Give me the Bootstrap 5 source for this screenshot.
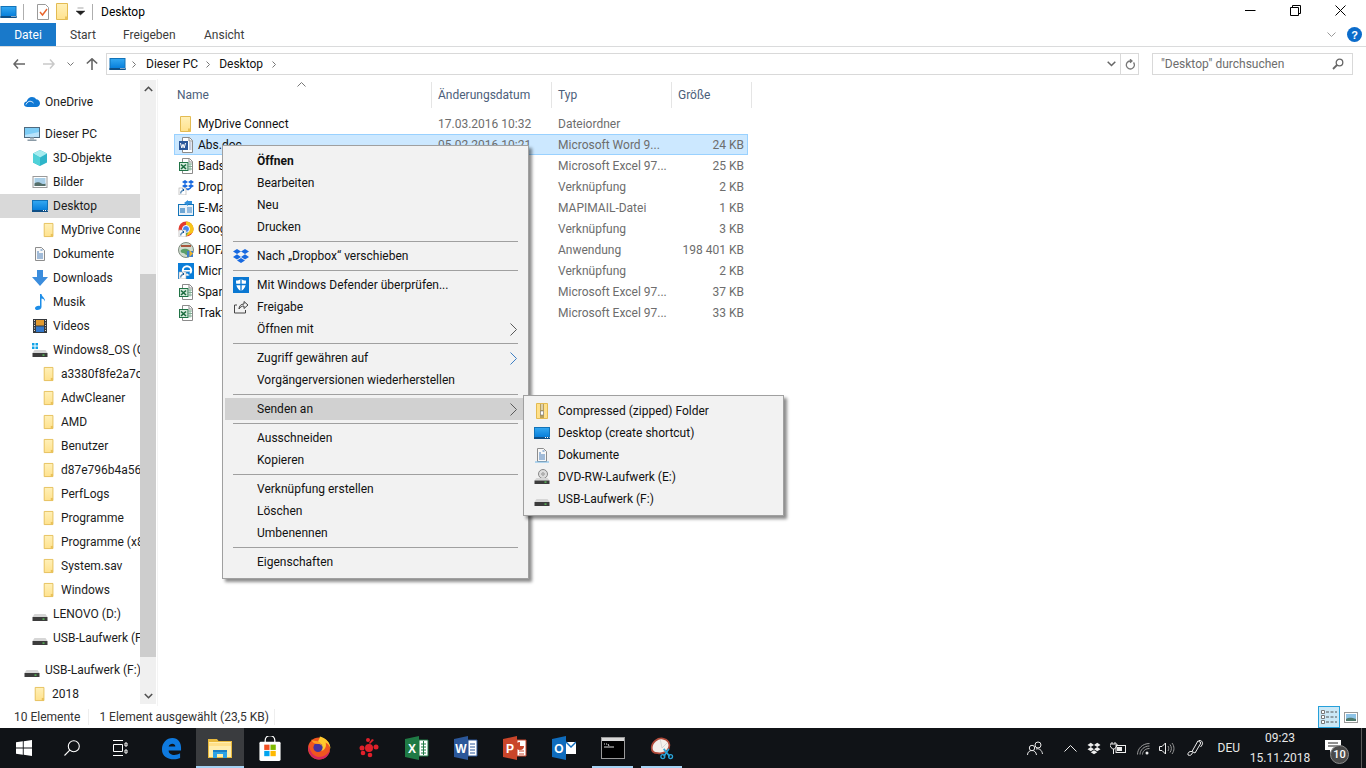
<!DOCTYPE html>
<html lang="de"><head><meta charset="utf-8"><title>Desktop</title>
<link href="https://cdn.jsdelivr.net/npm/bootstrap@5.3.0/dist/css/bootstrap.min.css" rel="stylesheet">
<style>
html,body{height:100%;overflow:hidden}
body{width:1366px;height:768px;background:#fff;font:12px/16px Roboto,"Noto Sans",sans-serif;color:#000}
svg{display:block;flex:none}
.ttl{height:23px}
.ttl-name{padding-top:1px}
.vsep{width:1px;height:16px;background:#aeaeae}
.wbtns{margin-left:auto;width:121px;padding-right:20px;justify-content:space-between;margin-top:-2px}
.rib{height:24px;border-bottom:1px solid #dadbdc}
.rtab{height:23px;display:flex;align-items:center;color:#3c3c3c}
.rtab.cur{background:#1979ca;color:#fff;width:56px;justify-content:center;margin-right:14px}
.t-start{width:53px}.t-frei{width:81px}
.addr{height:32px;padding-top:6px}
.ab{margin-left:13px;width:93px;height:22px}
.apath{margin:0;width:1033px;height:22px;border:1px solid #d9d9d9;padding-left:2px;color:#111}
.srch{margin-left:13px;width:201px;height:22px;border:1px solid #d9d9d9;padding:0 8px;color:#6d6d6d;justify-content:space-between}
.main{height:627px}
.nav-pane{width:158px;border-right:1px solid #f4f4f4;padding-top:1px}
.nav-list{width:140px;overflow:hidden;padding-top:10px}
.nrow{height:24px;display:flex;align-items:center;white-space:nowrap;overflow:hidden;color:#1c1c1c}
.nrow.sel{background:#d9d9d9}
.nrow.gap{margin-top:8px}
.l1{padding-left:24px}.l2{padding-left:32px}.l3{padding-left:42px}.l2b{padding-left:33px}
.nrow svg{margin-right:5px}
.sbar{width:16px;height:624px;background:#f0f0f0;flex:none}
.sarrow{height:17px}
.strack{height:590px;padding-top:177px}
.sthumb{height:383px;background:#cdcdcd}
.fl{padding:0 0 0 16px;flex:1;min-width:0}
.hdr{height:26px;margin:3px 0 0 3px;color:#4c607a;position:relative}
.hc{height:26px;padding-left:6px;border-right:1px solid #e5e5e5;display:flex;align-items:center}
.w1{width:255px;padding-left:0}.w2{width:120px}.w3{width:120px}.w4{width:80px}
.caret{position:absolute;left:120px;top:0}
.frows{padding-top:5px}
.fr{height:21px;width:574px;display:flex;align-items:center;border:1px solid transparent;color:#6d6d6d;white-space:nowrap}
.fr.sel{background:#cce8ff;border-color:#99d1ff}
.cn{width:258px;display:flex;align-items:center;color:#111;padding-left:3px;overflow:hidden}
.cn svg{margin-right:4px}
.cd{width:125px;padding-left:5px}
.ct{width:120px}
.cs{width:66px;text-align:right}
.stat{height:22px;color:#333;padding-left:14px}
.stat .vsep{height:16px;background:#eee}
.sp1{margin:0 10px 0 8px}.sp2{margin-left:5px}
.vbtns{margin-left:auto;margin-right:8px;gap:4px}
.vb{width:22px;height:22px;border:1px solid #26a0da;background:#cbe8f6;display:flex;align-items:center;justify-content:center}
.tbar{height:40px;background:#101317;color:#e8e8e8}
.tb{height:40px;width:48px;display:flex;align-items:center;justify-content:center;position:relative;flex:none}
.tb.app{width:49px}
.tb.first{margin-left:3px}
.tb.on{background:#3a3c3f;width:48px;margin-right:1px}
.tb.open:after,.tb.on:after{content:"";position:absolute;left:0;right:0;bottom:0;height:2px;background:#a5d2f3}
.tb.open:after{left:4px;right:4px}
.tray{margin-left:auto;font-size:12px;height:40px}
.clock{text-align:center;width:66px;line-height:20px;margin-left:7px}
.note{position:relative;width:16px;height:40px;margin:0 20px 0 12px;padding-top:12px}
.tbadge{position:absolute;left:5px;top:17px;width:19px;height:19px;border-radius:50%;background:#4b4b4b;border:1px solid #8c8c8c;color:#fff;font-size:11px;font-weight:500;line-height:17px;text-align:center}
.tend{width:1px;height:40px;background:#5a5a5a;margin-right:4px}
.cm{--bs-dropdown-padding-y:0;display:block;border-radius:0;border:1px solid #a0a0a0;background:#f2f2f2;box-shadow:3px 3px 3px rgba(0,0,0,.45);font-size:12px;color:#111;min-width:0;margin:0;padding:4px 2px 5px}
.cm1{position:absolute;left:222px;top:145px;width:307px}
.cm2{position:absolute;left:523px;top:395px;width:261px;z-index:1001}
.cmi{height:22px;padding:0 10px 0 32px;display:flex;align-items:center;position:relative;color:#111;white-space:nowrap}
.cmi.act{background:#d1d1d1}
.cmi.b{font-weight:700}
.cmi>svg:not(.arw){position:absolute;left:8px;top:3px}
.cmi>svg.arw{position:absolute;right:9px;top:5px}
.cm hr{margin:3px 8px;height:1px;border:0;background:#a0a0a0;opacity:1}
.cm2 .cmi{padding-left:32px}
</style></head><body class="d-flex flex-column">
<svg width="0" height="0" style="position:absolute"><defs>
<linearGradient id="gm" x1="0" y1="0" x2="0" y2="1"><stop offset="0" stop-color="#35a9f2"/><stop offset="1" stop-color="#0078d7"/></linearGradient>
<linearGradient id="gf" x1="0" y1="0" x2="0" y2="1"><stop offset="0" stop-color="#fff0b8"/><stop offset="1" stop-color="#ffe28e"/></linearGradient>
<symbol id="mon" viewBox="0 0 16 16"><rect x=".5" y="2.500" width="15" height="11" fill="url(#gm)" stroke="#1273b8"/><rect x="0" y="12" width="16" height="2" fill="#0f4f86"/><path d="M11 12.500h1M13 12.500h1M15 12.500h.5" stroke="#fff"/></symbol>
<symbol id="fold" viewBox="0 0 16 16"><path d="M2.500 .5h10v15h-10z" fill="url(#gf)" stroke="#e3bb52"/><path d="M10 15.500v-3h2.500v3z" fill="#e9c25a"/></symbol>
<symbol id="word" viewBox="0 0 16 16"><path d="M4.500 .5h7l3 3v12h-10z" fill="#fff" stroke="#8b8b8b"/><path d="M11 .5v3.500h3.500" fill="none" stroke="#8b8b8b"/><path d="M11 6h2.500M11 8h2.500M11 10h2.500M11 12h2.500" stroke="#8a9cc0"/><rect x="1" y="4" width="9" height="9" fill="#2b579a"/><path d="M2.500 6l1.300 5 1.200-3.800 1.200 3.800 1.300-5" fill="none" stroke="#fff"/></symbol>
<symbol id="xls" viewBox="0 0 16 16"><path d="M4.500 .5h7l3 3v12h-10z" fill="#fff" stroke="#8b8b8b"/><path d="M11 .5v3.500h3.500" fill="none" stroke="#8b8b8b"/><path d="M10.500 6h3.500M10.500 8.500h3.500M10.500 11h3.500M12 5.500v7" stroke="#7fae93"/><rect x="1.500" y="4.500" width="8.500" height="8" fill="#d5eadc" stroke="#217346"/><path d="M3 6.500l5 4.500M8 6.500l-5 4.500" stroke="#1a6b3e" stroke-width="1.600"/></symbol>
<symbol id="drop" viewBox="0 0 16 16"><g fill="#1769e0"><path d="M7 1l3 2-3 2-3-2zM13 1l3 2-3 2-3-2zM7 5l3 2-3 2-3-2zM13 5l3 2-3 2-3-2zM10 9.500l3-1.500v1.500l-3 2-2-1.300V9z"/></g></symbol>
<symbol id="dropf" viewBox="0 0 16 16"><g fill="#1769e0"><path d="M4 1l4 2.600-4 2.500L0 3.600zM12 1l4 2.600-4 2.500-4-2.500zM4 6.300L8 9l-4 2.500L0 9zM12 6.300L16 9l-4 2.500L8 9zM8 10l4 2.500-4 2.500-4-2.500z"/></g></symbol>
<symbol id="lnk" viewBox="0 0 16 16"><rect x="1" y="9" width="7" height="7" fill="#fff" stroke="#a8a8a8" stroke-width=".6"/><path d="M2.800 14.500c0-2.500 1-3.500 3-3.500M4.500 9.800l1.600 1.200-1.600 1.200" stroke="#0b5394" stroke-width="1" fill="none"/></symbol>
<symbol id="doc" viewBox="0 0 16 16"><path d="M3.500 1.500h6l3 3v10h-9z" fill="#f8f8f8" stroke="#8d8d8d"/><path d="M5 6h2M5 8h6M5 10h6M5 12h6M8.500 4h2" stroke="#4a7fb8"/></symbol>
<symbol id="dl" viewBox="0 0 16 16"><path d="M5 0h6v7h5l-8 9-8-9h5z" fill="#3b8ddd"/></symbol>
<symbol id="mus" viewBox="0 0 16 16"><path d="M8 0h1.500c.4 3 4 4 3.500 7.500-.6-2-2-2.800-3.500-3V13c0 2-2 3-4 3-1.700 0-2.500-.8-2.500-1.800C3 12.500 5.500 11.500 8 12z" fill="#1c8de8"/></symbol>
<symbol id="vid" viewBox="0 0 16 16"><rect x="1" y="1" width="14" height="14" fill="#35393d"/><path d="M2 2.500h1M2 5h1M2 7.500h1M2 10h1M2 12.500h1M13 2.500h1M13 5h1M13 7.500h1M13 10h1M13 12.500h1" stroke="#ddd"/><rect x="4" y="2" width="8" height="5.500" fill="#e29a2e"/><rect x="4" y="8.500" width="8" height="5.500" fill="#3377c9"/></symbol>
<symbol id="pic" viewBox="0 0 16 16"><rect x="1" y="2.500" width="14" height="11" fill="#fff" stroke="#9a9a9a"/><rect x="2.500" y="4" width="11" height="8" fill="#a9cfe8"/><path d="M2.500 9.500c3-2 5-1 7 0s3 .5 4 0V12h-11z" fill="#566f6a"/></symbol>
<symbol id="cube" viewBox="0 0 16 16"><path d="M8 0l7 3.500v9L8 16l-7-3.500v-9z" fill="#2eb5c9"/><path d="M8 7.500L15 3.500 8 0 1 3.500z" fill="#a6ecef"/><path d="M8 7.500V16L1 12.500v-9z" fill="#4fd1d8"/></symbol>
<symbol id="pc" viewBox="0 0 16 16"><rect x=".5" y="1.500" width="15" height="10" fill="#b9e3fb" stroke="#4f6a7f"/><path d="M1 2h14v4L1 9z" fill="#7ecdf6"/><rect x="6" y="11.500" width="4" height="2" fill="#a9b6bf"/><rect x="3.500" y="13.500" width="9" height="1.500" fill="#8a9aa6"/></symbol>
<symbol id="cld" viewBox="0 0 16 16"><path d="M3.500 13C1.500 13 0 12 0 10.200 0 8.700 1.200 7.600 2.600 7.500 3.300 4.800 5.500 3 8 3c1.700 0 3.300.9 4.100 2.300 2.200.1 3.900 1.900 3.900 4 0 2.200-1.700 3.700-3.800 3.700z" fill="#0f78d4"/><path d="M2 10.500c2-4 5-4 7.500-1.500" stroke="#fff" fill="none"/></symbol>
<symbol id="hdd" viewBox="0 0 16 16"><path d="M2.500 8h11l2 3H.5z" fill="#d6d6d6"/><rect x=".5" y="11" width="15" height="4" fill="#3c3c3c"/><rect x="10.500" y="12.500" width="2" height="1.200" fill="#5cd65c"/></symbol>
<symbol id="win8" viewBox="0 0 16 16"><path d="M0 1h2.500v2.500H0zM3.500 1H6v2.500H3.500zM0 4.500h2.500V7H0zM3.500 4.500H6V7H3.500z" fill="#11a3e8"/><path d="M2.500 8h11l2 3H.5z" fill="#d6d6d6"/><rect x=".5" y="11" width="15" height="4" fill="#3c3c3c"/><rect x="10.500" y="12.500" width="2" height="1.200" fill="#5cd65c"/></symbol>
<symbol id="mail" viewBox="0 0 16 16"><rect x=".5" y="4.500" width="15" height="11" fill="#e9f1f8" stroke="#1273b8"/><path d="M2 8h5v5H2z" fill="#6ea6d4"/><path d="M9 8h5M9 10h5M9 12h5" stroke="#3d85c6"/><path d="M14 1v3h-4v2L6 3l4-3v1z" fill="#2f90dc"/></symbol>
<symbol id="chr" viewBox="0 0 16 16"><circle cx="8" cy="8" r="7.500" fill="#e33b2e"/><path d="M8 8L1.500 11.800A7.500 7.500 0 0 0 8 15.500l4-7z" fill="#2fa84f"/><path d="M8 .5A7.500 7.500 0 0 1 14.500 11.800L8 15.500l3.500-7H8z" fill="#f7c519"/><circle cx="8" cy="8" r="3.500" fill="#4285f4" stroke="#fff"/></symbol>
<symbol id="glb" viewBox="0 0 16 16"><circle cx="8" cy="8" r="7.500" fill="#cfdccf" stroke="#7d8a7d"/><rect x="3" y="3" width="10" height="2" fill="#a8563c"/><path d="M3 8c3-2 6-1 8 0s0 5-2 5-2-2-4-2-3-2-2-3z" fill="#5b9e6a"/><path d="M9 9h6v6H9z" fill="#3d7fd0"/><path d="M11.500 8l3.500 3.500-3.500 3.500" fill="#f0b429"/></symbol>
<symbol id="ie" viewBox="0 0 16 16"><rect width="16" height="16" fill="#0a7dd8"/><circle cx="9" cy="7.500" r="4.200" fill="none" stroke="#fff" stroke-width="2"/><path d="M4.500 7.800h9" stroke="#fff" stroke-width="1.600"/><path d="M10 10.500l3 1" stroke="#0a7dd8" stroke-width="1.500"/></symbol>
<symbol id="arrow" viewBox="0 0 7 14"><path d="M.5 .5l6 6-6 6" fill="none" stroke="#5a5a5a"/></symbol>
<symbol id="arrowb" viewBox="0 0 7 14"><path d="M.5 .5l6 6-6 6" fill="none" stroke="#3d7fc4"/></symbol>
</defs></svg>

<!-- Title bar -->
<div class="ttl d-flex align-items-center">
<svg width="17" height="16"><use href="#mon"/></svg>
<div class="vsep" style="margin:0 11px 0 6px"></div>
<svg width="16" height="18" viewBox="0 0 16 18"><path d="M2.500 1.500h8l3 3v12h-11z" fill="#fff" stroke="#9a9a9a"/><path d="M5 9l2.500 3L12 6" fill="none" stroke="#e8632a" stroke-width="1.400"/></svg>
<svg style="margin-left:5px" width="14" height="17" viewBox="0 0 14 17"><path d="M.5 .5h11v16H.500z" fill="url(#gf)" stroke="#e3bb52"/><path d="M9 16.500v-3h2.500v3z" fill="#e9c25a"/></svg>
<svg style="margin-left:6px" width="9" height="9" viewBox="0 0 9 9"><path d="M1.500 1h6M0 4h9L4.500 8z" fill="#222" stroke="#222" stroke-width=".4"/></svg>
<div class="vsep" style="margin:0 8px 0 7px"></div>
<span class="ttl-name">Desktop</span>
<div class="wbtns d-flex align-items-center">
<svg width="11" height="11" viewBox="0 0 11 11"><path d="M0 5.500h10.500" stroke="#000"/></svg>
<svg width="11" height="11" viewBox="0 0 11 11"><path d="M.5 2.500h8v8h-8zM2.500 2.500v-2h8v8h-2" fill="none" stroke="#000"/></svg>
<svg width="11" height="11" viewBox="0 0 11 11"><path d="M.5 .5l10 10M10.500 .5l-10 10" stroke="#000"/></svg>
</div></div>

<!-- Ribbon tabs -->
<div class="rib d-flex align-items-start">
<div class="rtab cur">Datei</div><div class="rtab t-start">Start</div><div class="rtab t-frei">Freigeben</div><div class="rtab">Ansicht</div>
<div class="ms-auto d-flex align-items-center" style="height:23px;padding-right:4px;gap:11px">
<svg width="9" height="5" viewBox="0 0 9 5"><path d="M.5 .5l4 4 4-4" fill="none" stroke="#9a9a9a"/></svg>
<svg width="15" height="15" viewBox="0 0 15 15"><circle cx="7.500" cy="7.500" r="7.500" fill="#0b6ccb"/><text x="7.500" y="11.500" text-anchor="middle" font-family="Liberation Sans" font-weight="700" font-size="11" fill="#fff">?</text></svg>
</div></div>

<!-- Address row -->
<div class="addr d-flex">
<div class="ab d-flex align-items-center">
<svg width="12" height="10" viewBox="0 0 12 10"><path d="M5 .5L1 5l4 4.500M1 5h11" fill="none" stroke="#666" stroke-width="1.500"/></svg>
<svg style="margin-left:18px" width="12" height="10" viewBox="0 0 12 10"><path d="M7 .5L11 5l-4 4.500M11 5H0" fill="none" stroke="#c9c9c9" stroke-width="1.500"/></svg>
<svg style="margin-left:12px" width="7" height="4" viewBox="0 0 7 4"><path d="M.5 .5l3 3 3-3" fill="none" stroke="#777"/></svg>
<svg style="margin-left:12px" width="12" height="12" viewBox="0 0 12 12"><path d="M.8 5.500L6 .8l5.200 4.700M6 1v11" fill="none" stroke="#666" stroke-width="1.600"/></svg>
</div>
<div class="apath d-flex align-items-center">
<svg width="17" height="16"><use href="#mon"/></svg>
<svg style="margin:0 10px 0 6px" width="4" height="7" viewBox="0 0 4 7"><path d="M.5 .5l3 3-3 3" fill="none" stroke="#777"/></svg>
<span>Dieser PC</span>
<svg style="margin:0 9px 0 8px" width="4" height="7" viewBox="0 0 4 7"><path d="M.5 .5l3 3-3 3" fill="none" stroke="#777"/></svg>
<span>Desktop</span>
<svg style="margin-left:9px" width="4" height="7" viewBox="0 0 4 7"><path d="M.5 .5l3 3-3 3" fill="none" stroke="#777"/></svg>
<svg class="ms-auto" width="9" height="6" viewBox="0 0 9 6"><path d="M.7 .7l3.800 3.800L8.300 .7" fill="none" stroke="#666" stroke-width="1.500"/></svg>
<div class="vsep" style="height:20px;background:#d9d9d9;margin:0 4px"></div>
<svg style="margin-right:3px" width="10" height="11" viewBox="0 0 10 11"><path d="M8.500 3.500A4 4 0 1 1 5 2H7M5 .2L7 2 5 3.800" fill="none" stroke="#777" stroke-width="1.300"/></svg>
</div>
<div class="srch d-flex align-items-center"><span>"Desktop" durchsuchen</span>
<svg width="12" height="12" viewBox="0 0 12 12"><circle cx="7.500" cy="4.500" r="3.300" fill="none" stroke="#666" stroke-width="1.300"/><path d="M5 7l-4 4" stroke="#666" stroke-width="1.800"/></svg></div>
</div>

<!-- Main -->
<div class="main d-flex">
<div class="nav-pane d-flex">
<div class="nav-list">
<div class="nrow l1"><svg width="16" height="16"><use href="#cld"/></svg>OneDrive</div>
<div class="nrow l1 gap"><svg width="16" height="16"><use href="#pc"/></svg>Dieser PC</div>
<div class="nrow l2"><svg width="16" height="16"><use href="#cube"/></svg>3D-Objekte</div>
<div class="nrow l2"><svg width="16" height="16"><use href="#pic"/></svg>Bilder</div>
<div class="nrow l2 sel"><svg width="16" height="16"><use href="#mon"/></svg>Desktop</div>
<div class="nrow l3"><svg width="14" height="16"><use href="#fold"/></svg>MyDrive Connect</div>
<div class="nrow l2"><svg width="16" height="16"><use href="#doc"/></svg>Dokumente</div>
<div class="nrow l2"><svg width="16" height="16"><use href="#dl"/></svg>Downloads</div>
<div class="nrow l2"><svg width="16" height="16"><use href="#mus"/></svg>Musik</div>
<div class="nrow l2"><svg width="16" height="16"><use href="#vid"/></svg>Videos</div>
<div class="nrow l2"><svg width="16" height="16"><use href="#win8"/></svg>Windows8_OS (C:)</div>
<div class="nrow l3"><svg width="14" height="16"><use href="#fold"/></svg>a3380f8fe2a7cc</div>
<div class="nrow l3"><svg width="14" height="16"><use href="#fold"/></svg>AdwCleaner</div>
<div class="nrow l3"><svg width="14" height="16"><use href="#fold"/></svg>AMD</div>
<div class="nrow l3"><svg width="14" height="16"><use href="#fold"/></svg>Benutzer</div>
<div class="nrow l3"><svg width="14" height="16"><use href="#fold"/></svg>d87e796b4a569</div>
<div class="nrow l3"><svg width="14" height="16"><use href="#fold"/></svg>PerfLogs</div>
<div class="nrow l3"><svg width="14" height="16"><use href="#fold"/></svg>Programme</div>
<div class="nrow l3"><svg width="14" height="16"><use href="#fold"/></svg>Programme (x86)</div>
<div class="nrow l3"><svg width="14" height="16"><use href="#fold"/></svg>System.sav</div>
<div class="nrow l3"><svg width="14" height="16"><use href="#fold"/></svg>Windows</div>
<div class="nrow l2"><svg width="16" height="16"><use href="#hdd"/></svg>LENOVO (D:)</div>
<div class="nrow l2"><svg width="16" height="16"><use href="#hdd"/></svg>USB-Laufwerk (F:)</div>
<div class="nrow l1 gap"><svg width="16" height="16"><use href="#hdd"/></svg>USB-Laufwerk (F:)</div>
<div class="nrow l2b"><svg width="14" height="16"><use href="#fold"/></svg>2018</div>
</div>
<div class="sbar">
<div class="sarrow d-flex align-items-center justify-content-center"><svg width="9" height="6" viewBox="0 0 9 6"><path d="M.8 5L4.500 1.300 8.200 5" fill="none" stroke="#505050" stroke-width="1.600"/></svg></div>
<div class="strack"><div class="sthumb"></div></div>
<div class="sarrow d-flex align-items-center justify-content-center"><svg width="9" height="6" viewBox="0 0 9 6"><path d="M.8 1L4.500 4.700 8.200 1" fill="none" stroke="#505050" stroke-width="1.600"/></svg></div>
</div>
</div>
<div class="fl">
<div class="hdr d-flex"><svg class="caret" width="9" height="5" viewBox="0 0 9 5"><path d="M.5 4.500l4-4 4 4" fill="none" stroke="#777"/></svg>
<div class="hc w1">Name</div><div class="hc w2">Änderungsdatum</div><div class="hc w3">Typ</div><div class="hc w4">Größe</div></div>
<div class="frows">
<div class="fr"><div class="cn"><svg width="16" height="16"><use href="#fold"/></svg>MyDrive Connect</div><div class="cd">17.03.2016 10:32</div><div class="ct">Dateiordner</div><div class="cs"></div></div>
<div class="fr sel"><div class="cn"><svg width="16" height="16"><use href="#word"/></svg>Abs.doc</div><div class="cd">05.02.2016 10:21</div><div class="ct">Microsoft Word 9...</div><div class="cs">24 KB</div></div>
<div class="fr"><div class="cn"><svg width="16" height="16"><use href="#xls"/></svg>Badsanierung.xls</div><div class="cd"></div><div class="ct">Microsoft Excel 97...</div><div class="cs">25 KB</div></div>
<div class="fr"><div class="cn"><svg width="16" height="16"><use href="#drop"/><use href="#lnk"/></svg>Dropbox</div><div class="cd"></div><div class="ct">Verknüpfung</div><div class="cs">2 KB</div></div>
<div class="fr"><div class="cn"><svg width="16" height="16"><use href="#mail"/></svg>E-Mail-Empfänger</div><div class="cd"></div><div class="ct">MAPIMAIL-Datei</div><div class="cs">1 KB</div></div>
<div class="fr"><div class="cn"><svg width="16" height="16"><use href="#chr"/><use href="#lnk"/></svg>Google Chrome</div><div class="cd"></div><div class="ct">Verknüpfung</div><div class="cs">3 KB</div></div>
<div class="fr"><div class="cn"><svg width="16" height="16"><use href="#glb"/></svg>HOFA</div><div class="cd"></div><div class="ct">Anwendung</div><div class="cs">198 401 KB</div></div>
<div class="fr"><div class="cn"><svg width="16" height="16"><use href="#ie"/><use href="#lnk"/></svg>Microsoft Edge</div><div class="cd"></div><div class="ct">Verknüpfung</div><div class="cs">2 KB</div></div>
<div class="fr"><div class="cn"><svg width="16" height="16"><use href="#xls"/></svg>Spartipps.xls</div><div class="cd"></div><div class="ct">Microsoft Excel 97...</div><div class="cs">37 KB</div></div>
<div class="fr"><div class="cn"><svg width="16" height="16"><use href="#xls"/></svg>Traktor.xls</div><div class="cd"></div><div class="ct">Microsoft Excel 97...</div><div class="cs">33 KB</div></div>
</div>
</div>
</div>

<!-- Status -->
<div class="stat d-flex align-items-center"><span>10 Elemente</span><div class="vsep sp1"></div><span>1 Element ausgewählt (23,5 KB)</span><div class="vsep sp2"></div>
<div class="vbtns d-flex align-items-center">
<div class="vb"><svg width="16" height="14" viewBox="0 0 16 14"><path d="M.5 .5h3v3h-3zM.5 5.500h3v3h-3zM.5 10.500h3v3h-3z" fill="#fff" stroke="#777"/><path d="M5 2h3M9.500 2h3M14 2h2M5 7h3M9.500 7h3M14 7h2M5 12h3M9.500 12h3M14 12h2" stroke="#555"/></svg></div>
<svg width="14" height="11" viewBox="0 0 14 11"><rect x=".5" y=".5" width="13" height="10" fill="#fff" stroke="#999"/><rect x="2" y="2" width="10" height="7" fill="#8ec3e6"/><path d="M2 7c3-2 6-1 10 0v2H2z" fill="#4f7a6c"/></svg>
</div></div>

<!-- Taskbar -->
<div class="tbar d-flex">
<div class="tb"><svg width="16" height="16" viewBox="0 0 16 16"><path d="M0 2.300L6.800 1.300V7.500H0zM7.700 1.200L16 0V7.500H7.700zM0 8.500H6.800V14.700L0 13.700zM7.700 8.500H16V16L7.700 14.800z" fill="#fff"/></svg></div>
<div class="tb"><svg width="16" height="16" viewBox="0 0 16 16"><circle cx="9.800" cy="6.200" r="5.500" fill="none" stroke="#fff" stroke-width="1.100"/><path d="M5.800 10.200L.5 15.500" stroke="#fff" stroke-width="1.100"/></svg></div>
<div class="tb"><svg width="16" height="16" viewBox="0 0 16 16"><path d="M1 .5h10M1 15.500h10M1.500 4.500h9v7h-9z" fill="none" stroke="#fff"/><path d="M13 3v3h2V3zM13 10v3h2v-3z" fill="none" stroke="#fff"/></svg></div>
<div class="tb app first"><svg width="21" height="23" viewBox="0 0 22 24"><path d="M1 13C1 6 6 1 12 1c6 0 9 5 9 10v3H8c0 5 7 6 12 3v5c-7 3-19 1-19-9zm7-3h7c0-4-6-4-7 0z" fill="#0f7adf"/></svg></div>
<div class="tb on"><svg width="24" height="20" viewBox="0 0 24 20"><path d="M0 1h9l1.500 2H24v17H0z" fill="#e8b93d"/><path d="M1 4h22v15H1z" fill="#ffeeb0"/><path d="M1 5h22v3H1z" fill="#ffe08a"/><path d="M5 12h14v8h-4v-4H9v4H5z" fill="#2ea3e6"/><path d="M5 12h14v2H5z" fill="#1b7fc6"/></svg></div>
<div class="tb app"><svg width="24" height="25" viewBox="0 0 24 26"><path d="M7 7V4.500a5 5 0 0 1 10 0V7" fill="none" stroke="#fff" stroke-width="1.300"/><rect x="1" y="6" width="22" height="20" rx="1.500" fill="#fff"/><rect x="6" y="9" width="5.500" height="5.500" fill="#f25022"/><rect x="12.500" y="9" width="5.500" height="5.500" fill="#7fba00"/><rect x="6" y="15.500" width="5.500" height="5.500" fill="#00a4ef"/><rect x="12.500" y="15.500" width="5.500" height="5.500" fill="#ffb900"/></svg></div>
<div class="tb app"><svg width="24" height="24" viewBox="0 0 24 24"><circle cx="12" cy="12.500" r="11" fill="#f0561f"/><path d="M1.500 9c-1.500 8 4 14.500 10.500 14.500 6 0 10.500-4 11-10-1.500 4.500-6 7.500-11 7.500S3 16 1.500 9z" fill="#d4285f"/><path d="M13 .5c6 1.500 10.500 6 10.500 12.500-1-3.500-2.500-5.500-5-6.500 1.500 3.500-.5 8.500-5.500 8.500-2.500 0-4-1.500-4.500-3 3 1 6-.5 6-3-2.500.5-3.500-1-3.500-3 .8-3 2-4 2-6z" fill="#ffc92e"/><circle cx="11" cy="11.500" r="4.600" fill="#45329e"/><path d="M4 3.500c1.500 3 3.500 4.500 7 4.500 3 0 4.500 1.800 3.500 4.500 1.500-4.500-2.500-8-6-7.500C7 4.500 5 4.500 4 3.500z" fill="#ff9c1f"/></svg></div>
<div class="tb app"><svg width="22" height="22" viewBox="0 0 22 22"><g fill="#e0202a"><circle cx="12" cy="11" r="4"/><circle cx="5" cy="11" r="2.500"/><circle cx="19" cy="10" r="2.500"/><circle cx="11" cy="3" r="2"/><circle cx="6" cy="16" r="2.300"/><circle cx="13" cy="18" r="2.300"/><path d="M15 2l2 1-4 4-1-1z"/></g></svg></div>
<div class="tb app"><svg width="24" height="24" viewBox="0 0 24 24"><path d="M0 3L14 0v24L0 21z" fill="#1f7a45"/><path d="M14 4h9v16h-9z" fill="#fff" stroke="#1f7a45"/><path d="M16 8h5M16 11h5M16 14h5M16 17h5M18.500 5v14" stroke="#1f7a45"/><text x="7" y="16.500" text-anchor="middle" font-family="Liberation Sans" font-weight="700" font-size="12" fill="#fff">X</text></svg></div>
<div class="tb app"><svg width="24" height="24" viewBox="0 0 24 24"><path d="M0 3L14 0v24L0 21z" fill="#2b579a"/><path d="M14 4h9v16h-9z" fill="#fff" stroke="#2b579a"/><path d="M16 8h5M16 11h5M16 14h5M16 17h5" stroke="#2b579a"/><text x="7" y="16.500" text-anchor="middle" font-family="Liberation Sans" font-weight="700" font-size="12" fill="#fff">W</text></svg></div>
<div class="tb app"><svg width="24" height="24" viewBox="0 0 24 24"><path d="M0 3L14 0v24L0 21z" fill="#c9452a"/><path d="M14 4h9v16h-9z" fill="#fff" stroke="#c9452a"/><path d="M16 15h5M16 18h5" stroke="#c9452a"/><path d="M17 6a4 4 0 1 0 4 4h-4z" fill="#c9452a"/><text x="7" y="16.500" text-anchor="middle" font-family="Liberation Sans" font-weight="700" font-size="12" fill="#fff">P</text></svg></div>
<div class="tb app"><svg width="24" height="24" viewBox="0 0 24 24"><path d="M0 3L14 0v24L0 21z" fill="#0f6cbd"/><path d="M14 6h10v12H14z" fill="#fff"/><path d="M14 6l5 5 5-5" fill="none" stroke="#0f6cbd" stroke-width="1.400"/><text x="7" y="16.500" text-anchor="middle" font-family="Liberation Sans" font-weight="700" font-size="12" fill="#fff">O</text></svg></div>
<div class="tb app open"><svg width="24" height="24" viewBox="0 0 24 24"><rect x=".5" y="1.500" width="23" height="21" fill="#000" stroke="#9a9a9a"/><rect x="1" y="2" width="22" height="3" fill="#d8d8d8"/><path d="M3 8h1M5 8h1M7 8l1 2M3 11h10" stroke="#ddd"/></svg></div>
<div class="tb app open"><svg width="24" height="24" viewBox="0 0 28 26"><path d="M2 13C2 6 9 1 15 2c6 1 9 6 7 11-2 4-7 7-13 6-4 0-7-2-7-6z" fill="#f4f0ec" stroke="#b04a3a" stroke-width="2"/><path d="M12 3l2 10 6-6" fill="none" stroke="#d0d0d0"/><path d="M16 14l7 9M22 14l-6 9" stroke="#2aa4d8" stroke-width="2"/><circle cx="15" cy="23" r="2.300" fill="none" stroke="#2aa4d8" stroke-width="1.500"/><circle cx="24" cy="23" r="2.300" fill="none" stroke="#2aa4d8" stroke-width="1.500"/></svg></div>
<div class="tray d-flex align-items-center">
<svg width="16" height="15" viewBox="0 0 16 15"><circle cx="5" cy="7" r="2.700" fill="none" stroke="#e8e8e8"/><circle cx="11" cy="4" r="3" fill="none" stroke="#e8e8e8"/><path d="M.5 14c0-3 2-4.500 4.500-4.500S9 11 9.500 14M9 8c3-1 6 1 6.500 5" fill="none" stroke="#e8e8e8"/></svg>
<svg style="margin-left:21px" width="13" height="7" viewBox="0 0 13 7"><path d="M.5 6.500l6-6 6 6" fill="none" stroke="#eee"/></svg>
<svg style="margin-left:10px" width="14" height="13" viewBox="0 0 16 16"><path fill="#eee" d="M4 1l4 2.600-4 2.500L0 3.600zM12 1l4 2.600-4 2.500-4-2.500zM4 6.300L8 9l-4 2.500L0 9zM12 6.300L16 9l-4 2.500L8 9zM8 10l4 2.500-4 2.500-4-2.500z"/></svg>
<svg style="margin-left:9px" width="16" height="12" viewBox="0 0 16 12"><path d="M2 0v2M5 0v2M0 2h7v2L4.500 7H2.500L0 4zM3.500 7v5" fill="none" stroke="#eee"/><rect x="6" y="3.500" width="9.500" height="7" fill="none" stroke="#eee"/><rect x="7" y="5" width="5" height="4" fill="#eee"/></svg>
<svg style="margin-left:11px" width="13" height="13" viewBox="0 0 13 13"><path d="M.5 12.500c0-6 5-11 12-11M3 12.500c0-4.500 4-8.500 9.500-8.500M5.500 12.500c0-3 2.500-6 7-6" fill="none" stroke="#aaa" stroke-width=".9"/><circle cx="10" cy="11" r="1.500" fill="#eee"/></svg>
<svg style="margin-left:9px" width="16" height="13" viewBox="0 0 16 13"><path d="M.5 4.500h2.500L6.500 1v11L3 8.500H.5z" fill="none" stroke="#eee"/><path d="M9 4c1 1.500 1 3.500 0 5M11 2.500c1.800 2.500 1.800 5.500 0 8M13 1c2.600 3.500 2.600 7.500 0 11" fill="none" stroke="#999"/></svg>
<svg style="margin-left:12px" width="17" height="16" viewBox="0 0 17 16"><path d="M11 .8l3 2L8 13l-3-1.500z" fill="none" stroke="#eee"/><path d="M12 .5c3 0 4.500 2 3 4.500l-1.500 2" fill="none" stroke="#eee"/><path d="M5 11.500C2 11 .5 13 1 15c2 1 4 0 4.500-2.500" fill="none" stroke="#eee"/></svg>
<span style="margin-left:14px">DEU</span>
<div class="clock">09:23<br>15.11.2018</div>
<div class="note"><svg width="16" height="14" viewBox="0 0 16 14"><path d="M0 0h16v10H8l-3 3v-3H0z" fill="#fff"/><path d="M3 3h10M3 6h10" stroke="#222"/></svg><span class="tbadge">10</span></div>
<div class="tend"></div>
</div>
</div>

<!-- Context menus -->
<div class="dropdown-menu show cm cm1">
<div class="cmi b">Öffnen</div><div class="cmi">Bearbeiten</div><div class="cmi">Neu</div><div class="cmi">Drucken</div><hr>
<div class="cmi"><svg width="16" height="16"><use href="#dropf"/></svg>Nach „Dropbox“ verschieben</div><hr>
<div class="cmi"><svg width="16" height="16" viewBox="0 0 16 16"><rect width="16" height="16" fill="#0a78d2"/><path d="M8 2c2 1 3 1.500 5 1.500 0 5-1 8.500-5 10.500-4-2-5-5.500-5-10.500C5 3.500 6 3 8 2z" fill="#fff"/><path d="M8 1v14M2 7.500h12" stroke="#0a78d2" stroke-width="1.300"/></svg>Mit Windows Defender überprüfen...</div>
<div class="cmi"><svg width="16" height="16" viewBox="0 0 16 16"><path d="M4 6H1.500v8h11v-3M6 10c0-3 2-5 5-5V2.500L15 6l-4 3.500V7c-2 0-4 1-5 3z" fill="none" stroke="#444"/></svg>Freigabe</div>
<div class="cmi">Öffnen mit<svg class="arw" width="7" height="14"><use href="#arrow"/></svg></div><hr>
<div class="cmi">Zugriff gewähren auf<svg class="arw" width="7" height="14"><use href="#arrowb"/></svg></div>
<div class="cmi">Vorgängerversionen wiederherstellen</div><hr>
<div class="cmi act">Senden an<svg class="arw" width="7" height="14"><use href="#arrow"/></svg></div><hr>
<div class="cmi">Ausschneiden</div><div class="cmi">Kopieren</div><hr>
<div class="cmi">Verknüpfung erstellen</div><div class="cmi">Löschen</div><div class="cmi">Umbenennen</div><hr>
<div class="cmi">Eigenschaften</div>
</div>
<div class="dropdown-menu show cm cm2">
<div class="cmi"><svg width="16" height="16" viewBox="0 0 16 16"><path d="M2.500 .5h11v15h-11z" fill="#ffe08a" stroke="#e3bb52"/><rect x="6" y="1" width="4" height="14" fill="#b9a05a"/><path d="M7 2h2M7 4h2M7 6h2" stroke="#fff"/><rect x="6.500" y="8" width="3" height="4" fill="#fff" stroke="#777" stroke-width=".6"/></svg>Compressed (zipped) Folder</div>
<div class="cmi"><svg width="16" height="16"><use href="#mon"/></svg>Desktop (create shortcut)</div>
<div class="cmi"><svg width="16" height="16"><use href="#doc"/><path d="M1 15h14" stroke="#6fb5e8"/></svg>Dokumente</div>
<div class="cmi"><svg width="16" height="16" viewBox="0 0 16 16"><circle cx="9" cy="5" r="4.500" fill="#ddd" stroke="#888"/><circle cx="9" cy="5" r="1.200" fill="#fff" stroke="#888"/><path d="M2.500 9h11l2 2.500H.5z" fill="#d6d6d6"/><rect x=".5" y="11.500" width="15" height="3.500" fill="#3c3c3c"/><rect x="10.500" y="12.500" width="2" height="1.200" fill="#5cd65c"/></svg>DVD-RW-Laufwerk (E:)</div>
<div class="cmi"><svg width="16" height="16"><use href="#hdd"/></svg>USB-Laufwerk (F:)</div>
</div>
<script src="https://cdn.jsdelivr.net/npm/bootstrap@5.3.0/dist/js/bootstrap.bundle.min.js"></script>
</body></html>
